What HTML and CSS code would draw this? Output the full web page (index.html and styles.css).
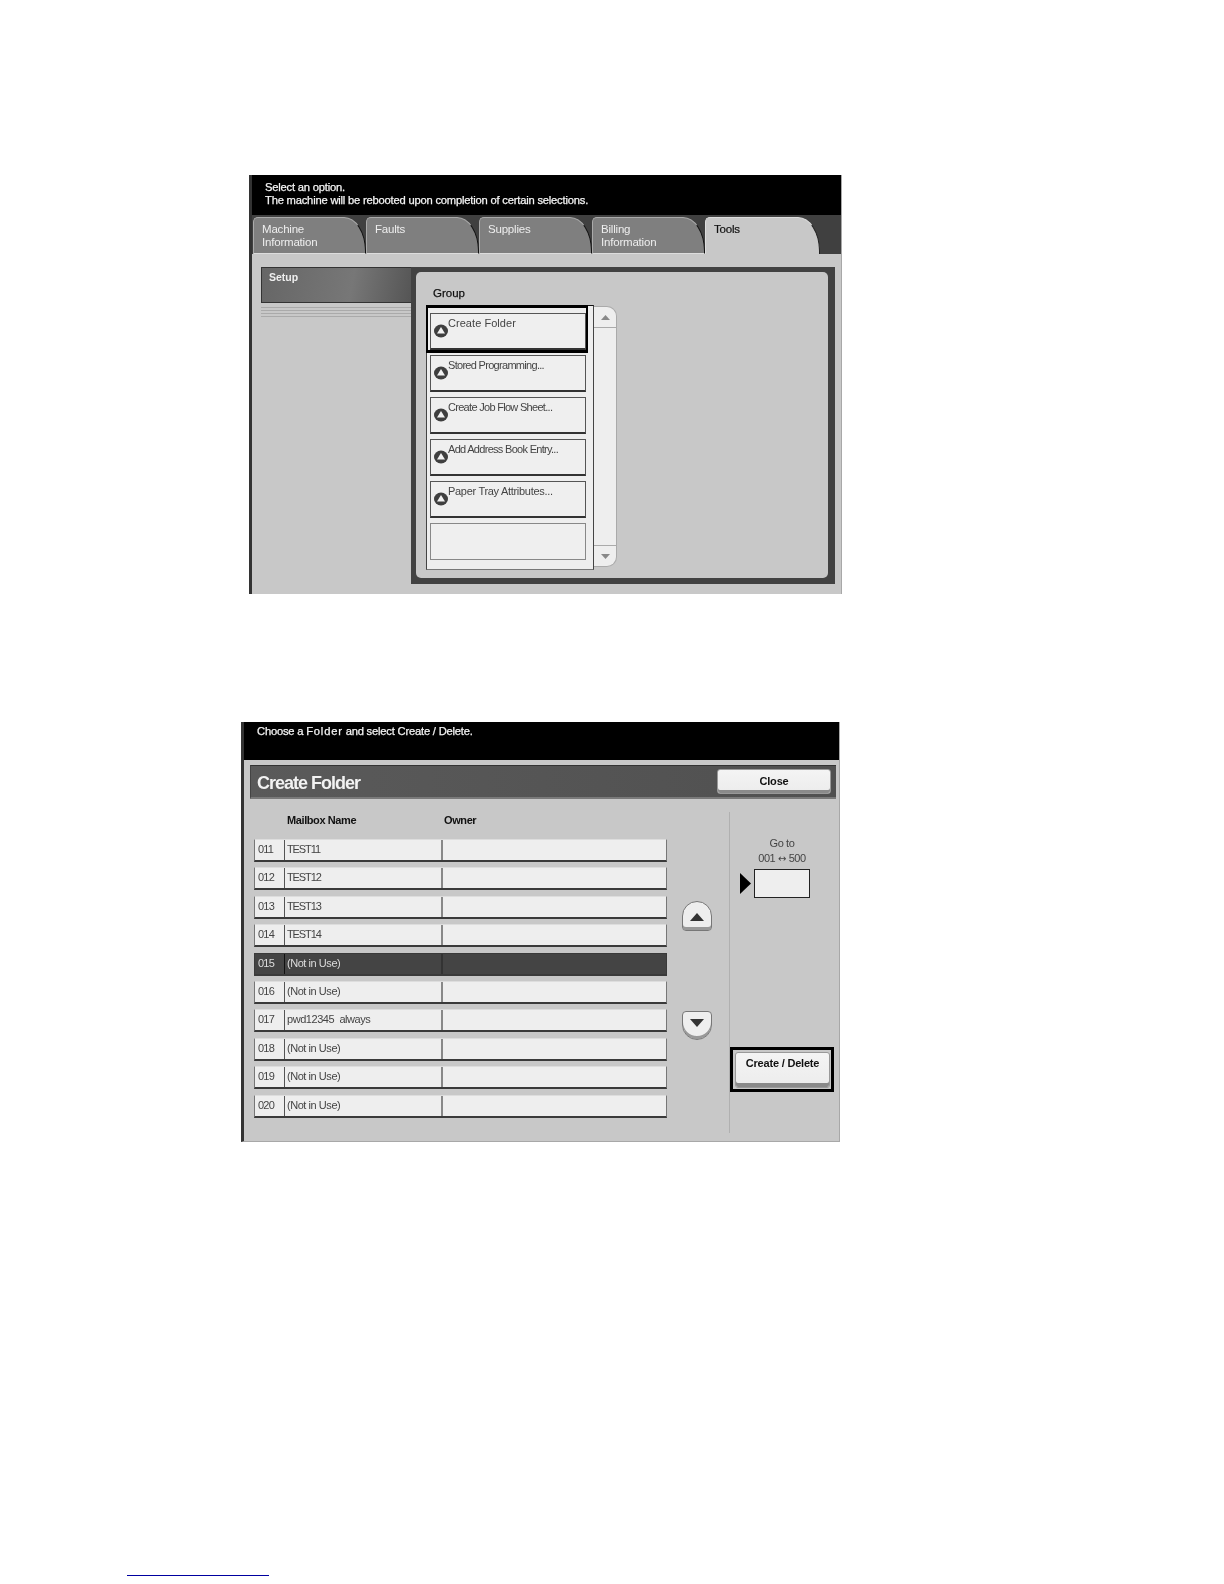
FILE: index.html
```html
<!DOCTYPE html>
<html lang="en">
<head>
<meta charset="utf-8">
<title>Create Folder</title>
<link rel="stylesheet" href="styles.css">
</head>
<body>
<section class="screen screen-tools">
  <header class="message msg-tall">
    <p>Select an option.</p>
    <p>The machine will be rebooted upon completion of certain selections.</p>
  </header>
  <nav class="tabs">
    <div class="tab">Machine<br>Information</div>
    <div class="tab">Faults</div>
    <div class="tab">Supplies</div>
    <div class="tab">Billing<br>Information</div>
    <div class="tab tab-active">Tools</div>
  </nav>
  <div class="tools-body">
    <aside class="side">
      <div class="side-tab">Setup</div>
      <div class="side-stripes"></div>
    </aside>
    <div class="group-frame">
      <div class="group-inner">
        <div class="group-label">Group</div>
        <div class="group-list">
          <div class="list-box">
            <div class="item item-selected"><svg class="item-icon" viewBox="0 0 14 14"><ellipse cx="7" cy="7" rx="7" ry="6.5" fill="#3f3f3f"/><path d="M7 3 L11 9.4 H3 Z" fill="#f2f2f2"/></svg><span class="label-loose">Create Folder</span></div>
            <div class="item"><svg class="item-icon" viewBox="0 0 14 14"><ellipse cx="7" cy="7" rx="7" ry="6.5" fill="#3f3f3f"/><path d="M7 3 L11 9.4 H3 Z" fill="#f2f2f2"/></svg><span>Stored Programming...</span></div>
            <div class="item"><svg class="item-icon" viewBox="0 0 14 14"><ellipse cx="7" cy="7" rx="7" ry="6.5" fill="#3f3f3f"/><path d="M7 3 L11 9.4 H3 Z" fill="#f2f2f2"/></svg><span>Create Job Flow Sheet...</span></div>
            <div class="item"><svg class="item-icon" viewBox="0 0 14 14"><ellipse cx="7" cy="7" rx="7" ry="6.5" fill="#3f3f3f"/><path d="M7 3 L11 9.4 H3 Z" fill="#f2f2f2"/></svg><span>Add Address Book Entry...</span></div>
            <div class="item"><svg class="item-icon" viewBox="0 0 14 14"><ellipse cx="7" cy="7" rx="7" ry="6.5" fill="#3f3f3f"/><path d="M7 3 L11 9.4 H3 Z" fill="#f2f2f2"/></svg><span class="label-mid">Paper Tray Attributes...</span></div>
            <div class="item item-empty"></div>
          </div>
          <div class="scroll">
            <div class="scroll-end scroll-up"><svg viewBox="0 0 9 5" class="scroll-arrow"><path d="M4.5 0 L9 5 H0 Z"/></svg></div>
            <div class="scroll-end scroll-down"><svg viewBox="0 0 9 5" class="scroll-arrow"><path d="M0 0 H9 L4.5 5 Z"/></svg></div>
          </div>
        </div>
      </div>
    </div>
  </div>
</section>

<section class="screen screen-folder">
  <header class="message msg-short">
    <p>Choose a <b class="wide">Folder</b> and select Create / Delete.</p>
  </header>
  <div class="title-bar">
    <h1>Create Folder</h1>
    <div class="btn btn-close">Close</div>
  </div>
  <div class="folder-body">
    <div class="table">
      <div class="table-head"><span class="head-name">Mailbox Name</span><span>Owner</span></div>
      <div class="rows">
        <div class="row"><span class="c-num">011</span><span class="c-name c-test">TEST11</span><span class="c-owner"></span></div>
        <div class="row"><span class="c-num">012</span><span class="c-name c-test">TEST12</span><span class="c-owner"></span></div>
        <div class="row"><span class="c-num">013</span><span class="c-name c-test">TEST13</span><span class="c-owner"></span></div>
        <div class="row"><span class="c-num">014</span><span class="c-name c-test">TEST14</span><span class="c-owner"></span></div>
        <div class="row row-selected"><span class="c-num">015</span><span class="c-name">(Not in Use)</span><span class="c-owner"></span></div>
        <div class="row"><span class="c-num">016</span><span class="c-name">(Not in Use)</span><span class="c-owner"></span></div>
        <div class="row"><span class="c-num">017</span><span class="c-name">pwd12345&nbsp; always</span><span class="c-owner"></span></div>
        <div class="row"><span class="c-num">018</span><span class="c-name">(Not in Use)</span><span class="c-owner"></span></div>
        <div class="row"><span class="c-num">019</span><span class="c-name">(Not in Use)</span><span class="c-owner"></span></div>
        <div class="row"><span class="c-num">020</span><span class="c-name">(Not in Use)</span><span class="c-owner"></span></div>
      </div>
    </div>
    <div class="pager">
      <div class="page-btn page-up"><svg viewBox="0 0 14 8" class="page-arrow"><path d="M7 0 L14 8 H0 Z"/></svg></div>
      <div class="page-btn page-down"><svg viewBox="0 0 14 8" class="page-arrow"><path d="M0 0 H14 L7 8 Z"/></svg></div>
    </div>
    <div class="actions">
      <div class="goto-label">Go to<br>001 <span class="goto-arrow">↔</span> 500</div>
      <div class="goto-row"><svg class="goto-mark" viewBox="0 0 11 21"><path d="M0 0 L11 10.5 L0 21 Z"/></svg><div class="goto-input"></div></div>
      <div class="create-frame"><div class="btn btn-create">Create / Delete</div></div>
    </div>
  </div>
</section>

<div class="footnote-rule"></div>
</body>
</html>
```

FILE: styles.css
```css
* { box-sizing: border-box; }
html, body { margin: 0; padding: 0; background: #fff; }
body {
  width: 1224px;
  height: 1584px;
  overflow: hidden;
  padding-top: 175px;
  font-family: "Liberation Sans", Arial, sans-serif;
  font-size: 12px;
  color: #222;
}
p, h1 { margin: 0; }

.screen { background: #c8c8c8; border-left: 3px solid #333; border-right: 1px solid #a8a8a8; filter: blur(.3px); }
.screen-tools { width: 593px; height: 419px; margin-left: 249px; }
.screen-folder { width: 599px; height: 420px; margin-left: 241px; margin-top: 128px; border-bottom: 1px solid #a8a8a8; }

.message { background: #000; color: #f4f4f4; font-size: 11.2px; line-height: 13px; letter-spacing: -.2px; -webkit-text-stroke: .25px #f4f4f4; }
.msg-tall { height: 40px; padding: 6px 0 0 13px; }
.msg-short { height: 38px; padding: 3px 0 0 13px; }
.wide { font-weight: normal; letter-spacing: .8px; }

.tabs { height: 39px; display: flex; background: #404040; padding: 2px 0 0 1px; }
.tab {
  width: 113px;
  background: #7f7f7f;
  color: #eee;
  font-size: 11.5px;
  line-height: 13px;
  letter-spacing: -.2px;
  padding: 5px 0 0 8px;
  border-top: 1px solid #aaa;
  border-left: 1px solid #aaa;
  border-right: 1px solid #111;
  border-bottom: 1px solid #ddd;
  border-radius: 5px 22px 0 0 / 5px 34px 0 0;
}
.tab-active { width: 115px; background: #c8c8c8; color: #111; border-bottom: 0; border-color: #ddd #222 #c8c8c8 #ddd; -webkit-text-stroke: .2px #111; }

.tools-body { display: flex; padding: 13px 0 0 9px; }
.side { width: 150px; }
.side-tab {
  height: 36px;
  padding: 2px 0 0 7px;
  color: #eee;
  font-weight: bold;
  font-size: 10.5px;
  line-height: 14px;
  background: linear-gradient(100deg, #666, #777 60%, #555);
  border-top: 1px solid #333;
  border-left: 1px solid #333;
  border-bottom: 1px solid #333;
}
.side-stripes { height: 10px; margin-top: 4px; background: repeating-linear-gradient(to bottom, #aaa 0, #aaa 1px, #c8c8c8 1px, #c8c8c8 3px); }

.group-frame { width: 424px; height: 317px; padding: 5px 7px 6px 5px; background: #424242; }
.group-inner { height: 100%; background: #c8c8c8; border-radius: 5px; padding-top: 14px; }
.group-label { height: 14px; margin-left: 17px; line-height: 14px; font-size: 11.5px; color: #111; -webkit-text-stroke: .25px #111; }
.group-list { display: flex; align-items: flex-start; margin: 5px 0 0 10px; }
.list-box {
  width: 168px;
  height: 265px;
  background: #eee;
  border: 1px solid #444;
  border-top-color: #111;
  border-bottom-color: #777;
  padding: 7px 7px 0 3px;
  display: flex;
  flex-direction: column;
  gap: 5px;
}
.item {
  position: relative;
  height: 37px;
  flex: none;
  display: flex;
  align-items: flex-start;
  border: 1px solid #555;
  border-bottom: 2px solid #333;
  background: #efefef;
  color: #444;
  font-size: 11px;
  letter-spacing: -.7px;
  line-height: 14px;
}
.item span { margin: 2px 0 0 0; }
.item .label-loose { letter-spacing: .05px; }
.item .label-mid { letter-spacing: -.3px; }
.item-icon { width: 14px; height: 14px; flex: none; margin: 10px 0 0 3px; }
.item-selected::before { content: ""; position: absolute; inset: -9px -3px -5px -5px; border: 3px solid #000; border-right-width: 2px; border-left-width: 2px; }
.item-empty { border: 1px solid #888; }

.scroll {
  width: 23px;
  height: 261px;
  margin-top: 1px;
  background: #eee;
  border: 1px solid #aaa;
  border-left: 0;
  border-radius: 0 10px 10px 0;
  display: flex;
  flex-direction: column;
  justify-content: space-between;
}
.scroll-end { height: 21px; display: flex; align-items: center; justify-content: center; }
.scroll-up { border-bottom: 1px solid #aaa; }
.scroll-down { border-top: 1px solid #aaa; }
.scroll-arrow { width: 9px; height: 5px; fill: #888; }

.title-bar {
  height: 34px;
  margin: 5px 3px 0 6px;
  padding: 3px 5px 0 6px;
  display: flex;
  justify-content: space-between;
  align-items: flex-start;
  background: linear-gradient(to right, #5a5a5a, #505050);
  border-top: 1px solid #333;
  border-left: 1px solid #444;
  border-bottom: 2px solid #7a7a7a;
}
.title-bar h1 { font-size: 18px; line-height: 24px; margin-top: 2px; font-weight: bold; color: #f2f2f2; letter-spacing: -1px; }

.btn {
  background: linear-gradient(#f4f4f4, #ececec);
  border: 1px solid #999;
  border-radius: 3px;
  color: #111;
  font-weight: bold;
  font-size: 11px;
  text-align: center;
  letter-spacing: -.2px;
}
.btn-close { width: 114px; height: 25px; line-height: 23px; box-shadow: inset 0 -3px 0 #8a8a8a; }

.folder-body { display: flex; padding-left: 10px; }
.table { width: 413px; padding-top: 13px; }
.table-head { height: 16px; line-height: 16px; display: flex; color: #111; font-size: 11px; font-weight: bold; letter-spacing: -.4px; }
.head-name { width: 155px; flex: none; margin-left: 33px; margin-right: 2px; }
.rows { margin-top: 11px; display: grid; grid-auto-rows: 23px; row-gap: 5.4px; }
.row {
  display: grid;
  grid-template-columns: 30px 158px 1fr;
  background: #eee;
  border-left: 1px solid #777;
  border-top: 1px solid #ddd;
  border-bottom: 2px solid #3a3a3a;
  border-right: 1px solid #777;
  color: #444;
  font-size: 11px;
  line-height: 18px;
  letter-spacing: -.45px;
}
.c-num { padding-left: 3px; border-right: 1px solid #555; letter-spacing: -.8px; }
.c-name { padding-left: 2px; border-right: 2px solid #888; }
.c-test { letter-spacing: -1.1px; }
.row-selected { background: #444; color: #ddd; border-color: #3a3a3a; }
.row-selected .c-num { border-right-color: #111; }
.row-selected .c-name { border-right-color: #333; }

.pager { width: 30px; margin-left: 15px; padding-top: 102px; display: flex; flex-direction: column; gap: 80px; }
.page-btn {
  width: 30px;
  display: flex;
  align-items: center;
  justify-content: center;
  background: #eee;
  border: 1px solid #777;
}
.page-up { height: 30px; border-radius: 15px 15px 4px 4px; box-shadow: inset 0 -3px 0 #999; padding-top: 2px; }
.page-down { height: 29px; border-radius: 4px 4px 15px 15px; box-shadow: inset 0 -3px 0 #999; padding-bottom: 5px; }
.page-arrow { width: 14px; height: 8px; fill: #333; }

.actions { width: 105px; height: 321px; margin: 13px 0 0 17px; border-left: 1px solid #b0b0b0; padding-top: 24px; }
.goto-label { height: 30px; line-height: 15px; text-align: center; font-size: 11px; color: #444; letter-spacing: -.4px; }
.goto-arrow { font-family: "DejaVu Sans", sans-serif; font-size: 10px; }
.goto-row { display: flex; align-items: center; gap: 3px; margin-top: 3px; padding-left: 10px; }
.goto-mark { width: 11px; height: 21px; fill: #000; }
.goto-input { width: 56px; height: 29px; background: #eee; border: 1px solid #222; }
.create-frame { width: 104px; height: 45px; margin-top: 149px; border: 3px solid #000; padding: 2px 1px 1px 2px; }
.btn-create { height: 100%; line-height: 21px; box-shadow: inset 0 -4px 0 #8a8a8a; }

.footnote-rule { width: 142px; height: 1px; margin: 433px 0 0 127px; background: #0000a0; }
```
